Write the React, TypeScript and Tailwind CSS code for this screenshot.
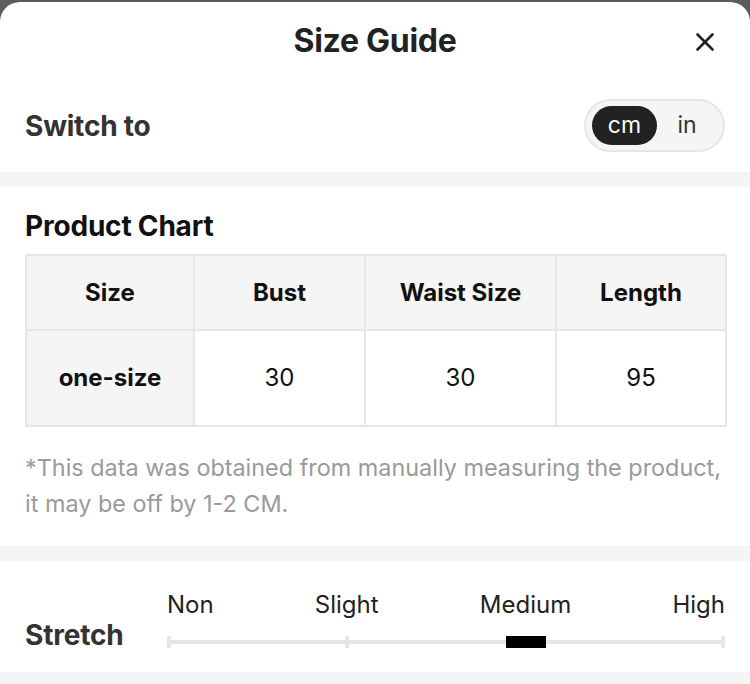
import { X } from "lucide-react";

const headers = ["Size", "Bust", "Waist Size", "Length"];
const row = ["one-size", "30", "30", "95"];
const widths = ["w-[168px]", "w-[171px]", "w-[191px]", "w-[170px]"];

const levels = [
  { label: "Non", align: "items-start" },
  { label: "Slight", align: "items-center" },
  { label: "Medium", align: "items-center", active: true },
  { label: "High", align: "items-end" },
];

export default function App() {
  return (
    <div className="w-[750px] h-[684px] overflow-hidden bg-[#5c5c5c] pt-[2px] font-['Inter',sans-serif] text-[#222]">
      <div className="h-full bg-white rounded-t-[20px] flex flex-col">
        {/* Header */}
        <div className="relative h-[78px] flex items-center justify-center">
          <h1 className="text-[32px] font-bold tracking-[-0.3px]">Size Guide</h1>
          <button className="absolute right-[30px] top-[25px] text-[#222]">
            <X size={30} strokeWidth={2.1} />
          </button>
        </div>

        {/* Unit switch */}
        <div className="flex items-center justify-between px-[25px] h-[92px] pb-[2px]">
          <span className="text-[28px] font-bold text-[#333] tracking-[-0.2px] mt-[2px]">Switch to</span>
          <div className="flex items-center h-[53px] w-[141px] rounded-full border-2 border-[#e6e6e6] bg-[#f5f5f5] px-[6px]">
            <span className="h-[39px] w-[65px] rounded-full bg-[#222] text-white text-[23px] flex items-center justify-center">
              cm
            </span>
            <span className="flex-1 text-[23px] text-[#333] text-center">in</span>
          </div>
        </div>

        <div className="h-[15px] bg-[#f5f5f5]" />

        {/* Product chart */}
        <div className="px-[25px] pt-[21px]">
          <h2 className="text-[28px] font-bold text-[#111] leading-[36px] tracking-[-0.2px]">Product Chart</h2>
          <table className="mt-[10px] border-collapse table-fixed w-[700px]">
            <thead>
              <tr className="h-[75px] bg-[#f5f5f5]">
                {headers.map((h, i) => (
                  <th
                    key={h}
                    className={`${widths[i]} border-2 border-[#e6e6e6] text-[24px] font-bold text-[#111]`}
                  >
                    {h}
                  </th>
                ))}
              </tr>
            </thead>
            <tbody>
              <tr className="h-[96px]">
                {row.map((c, i) => (
                  <td
                    key={i}
                    className={`border-2 border-[#e6e6e6] text-center text-[24px] text-[#111] ${
                      i === 0 ? "bg-[#f5f5f5] font-bold" : "bg-white"
                    }`}
                  >
                    {c}
                  </td>
                ))}
              </tr>
            </tbody>
          </table>
          <p className="mt-[23px] mb-[24px] text-[23.4px] leading-[36px] text-[#9a9a9a] whitespace-nowrap">
            *This data was obtained from manually measuring the product,
            <br />
            it may be off by 1-2 CM.
          </p>
        </div>

        <div className="h-[15px] bg-[#f5f5f5]" />

        {/* Stretch */}
        <div className="flex items-end px-[25px] h-[111px] pb-[24px]">
          <span className="w-[142px] text-[28px] font-bold text-[#333] leading-[30px] mb-[-2px] tracking-[-0.2px]">Stretch</span>
          <div className="relative flex-1 flex justify-between">
            <div className="absolute left-0 right-0 bottom-[4px] h-[4px] bg-[#e6e6e6]" />
            {levels.map((l) => (
              <div key={l.label} className={`relative flex flex-col ${l.align}`}>
                <span className="text-[24px] leading-[28px] text-[#222]">{l.label}</span>
                <div className="mt-[17px]">
                  {l.active ? (
                    <div className="h-[12px] w-[40px] bg-black" />
                  ) : (
                    <div className="h-[12px] w-[4px] bg-[#e6e6e6]" />
                  )}
                </div>
              </div>
            ))}
          </div>
        </div>

        <div className="flex-1 bg-[#f5f5f5]" />
      </div>
    </div>
  );
}
